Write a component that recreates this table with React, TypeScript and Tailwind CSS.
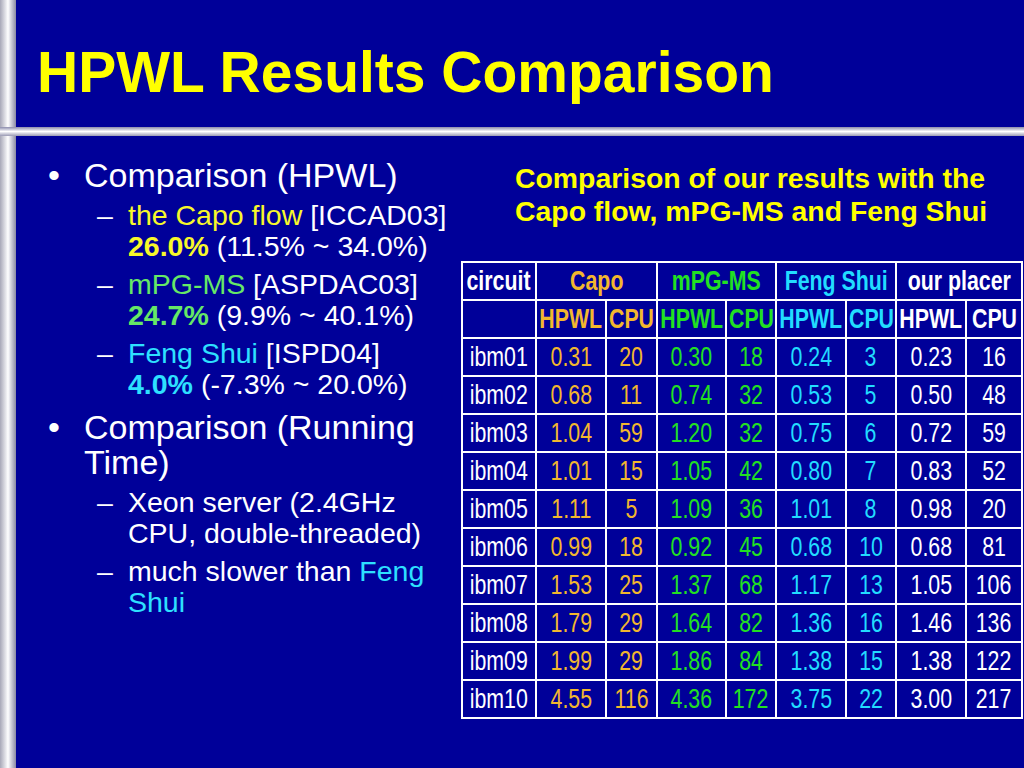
const rows = [
  ['ibm01', '0.31', '20', '0.30', '18', '0.24', '3', '0.23', '16'],
  ['ibm02', '0.68', '11', '0.74', '32', '0.53', '5', '0.50', '48'],
  ['ibm03', '1.04', '59', '1.20', '32', '0.75', '6', '0.72', '59'],
  ['ibm04', '1.01', '15', '1.05', '42', '0.80', '7', '0.83', '52'],
  ['ibm05', '1.11', '5', '1.09', '36', '1.01', '8', '0.98', '20'],
  ['ibm06', '0.99', '18', '0.92', '45', '0.68', '10', '0.68', '81'],
  ['ibm07', '1.53', '25', '1.37', '68', '1.17', '13', '1.05', '106'],
  ['ibm08', '1.79', '29', '1.64', '82', '1.36', '16', '1.46', '136'],
  ['ibm09', '1.99', '29', '1.86', '84', '1.38', '15', '1.38', '122'],
  ['ibm10', '4.55', '116', '4.36', '172', '3.75', '22', '3.00', '217'],
];

// colour for each data column
const colColors = [
  'text-white',
  'text-[#f2b72e]',
  'text-[#f2b72e]',
  'text-[#22e022]',
  'text-[#22e022]',
  'text-[#22dcff]',
  'text-[#22dcff]',
  'text-white',
  'text-white',
];

const cell = 'bg-[#000099] h-[36px] flex items-center justify-center overflow-visible';

// no narrow font installed, so squeeze Liberation Sans sideways
const Narrow = ({ children }: { children: React.ReactNode }) => (
  <span className="inline-block whitespace-nowrap scale-x-[0.79]">{children}</span>
);

const VBar = () => (
  <div className="w-[16px] shrink-0 bg-gradient-to-r from-[#a8a8b8] via-[#ffffff] to-[#8a8aa4]" />
);

const Bullet = ({ children }: { children: React.ReactNode }) => (
  <div className="flex mt-[10px] first:mt-0 text-[34px] leading-[35px] text-white">
    <span className="w-[38px] shrink-0 pl-[2px]">•</span>
    <div>{children}</div>
  </div>
);

const Sub = ({ children }: { children: React.ReactNode }) => (
  <div className="flex mt-[7px] text-[28.5px] leading-[31px] text-white">
    <span className="w-[44px] shrink-0 pl-[13px]">–</span>
    <div>{children}</div>
  </div>
);

export default function App() {
  return (
    <div
      className="w-[1024px] h-[768px] bg-[#000099] flex flex-col overflow-hidden"
      style={{ fontFamily: '"Liberation Sans", Arial, sans-serif' }}
    >
      {/* Title */}
      <div className="flex h-[127px]">
        <VBar />
        <h1 className="pl-[21px] pt-[44px] text-[57px] leading-[57px] font-bold text-[#ffff00]">
          HPWL Results Comparison
        </h1>
      </div>

      <div className="h-[9px] bg-gradient-to-b from-[#8c8cac] via-[#ffffff] to-[#9a9ab4]" />

      {/* Body */}
      <div className="flex flex-1">
        <VBar />

        <div className="w-[445px] shrink-0 pt-[22px] pl-[30px]">
          <Bullet>
            Comparison (HPWL)
            <Sub>
              <span className="text-[#f8f82a]">the Capo flow</span> [ICCAD03]
              <br />
              <b className="text-[#f8f82a]">26.0%</b> (11.5% ~ 34.0%)
            </Sub>
            <Sub>
              <span className="text-[#66e866]">mPG-MS</span> [ASPDAC03]
              <br />
              <b className="text-[#66e866]">24.7%</b> (9.9% ~ 40.1%)
            </Sub>
            <Sub>
              <span className="text-[#2ee0ff]">Feng Shui</span> [ISPD04]
              <br />
              <b className="text-[#2ee0ff]">4.0%</b> (-7.3% ~ 20.0%)
            </Sub>
          </Bullet>
          <Bullet>
            Comparison (Running
            <br />
            Time)
            <div className="mt-[2px]">
              <Sub>
                Xeon server (2.4GHz
                <br />
                CPU, double-threaded)
              </Sub>
              <Sub>
                much slower than <span className="text-[#2ee0ff]">Feng</span>
                <br />
                <span className="text-[#2ee0ff]">Shui</span>
              </Sub>
            </div>
          </Bullet>
        </div>

        <div className="flex-1 flex flex-col">
          <p className="pl-[54px] pt-[26px] text-[28.4px] leading-[33px] font-bold text-[#ffff00]">
            Comparison of our results with the
            <br />
            Capo flow, mPG-MS and Feng Shui
          </p>

          {/* Table */}
          <div className="mt-[33px] grid grid-cols-[72px_68px_49px_67px_48px_68px_48px_68px_54px] gap-[2px] p-[2px] bg-white w-fit text-[27px] leading-none">
            <div className={`${cell} font-bold text-white`}><Narrow>circuit</Narrow></div>
            <div className={`${cell} col-span-2 font-bold text-[#f2b72e]`}><Narrow>Capo</Narrow></div>
            <div className={`${cell} col-span-2 font-bold text-[#22e022]`}><Narrow>mPG-MS</Narrow></div>
            <div className={`${cell} col-span-2 font-bold text-[#22dcff]`}><Narrow>Feng Shui</Narrow></div>
            <div className={`${cell} col-span-2 font-bold text-white`}><Narrow>our placer</Narrow></div>

            <div className={cell} />
            {['HPWL', 'CPU', 'HPWL', 'CPU', 'HPWL', 'CPU', 'HPWL', 'CPU'].map((h, i) => (
              <div key={i} className={`${cell} font-bold ${colColors[i + 1]}`}>
                <Narrow>{h}</Narrow>
              </div>
            ))}

            {rows.map((r) =>
              r.map((v, i) => (
                <div key={r[0] + i} className={`${cell} ${colColors[i]}`}>
                  <Narrow>{v}</Narrow>
                </div>
              ))
            )}
          </div>
        </div>
      </div>
    </div>
  );
}
